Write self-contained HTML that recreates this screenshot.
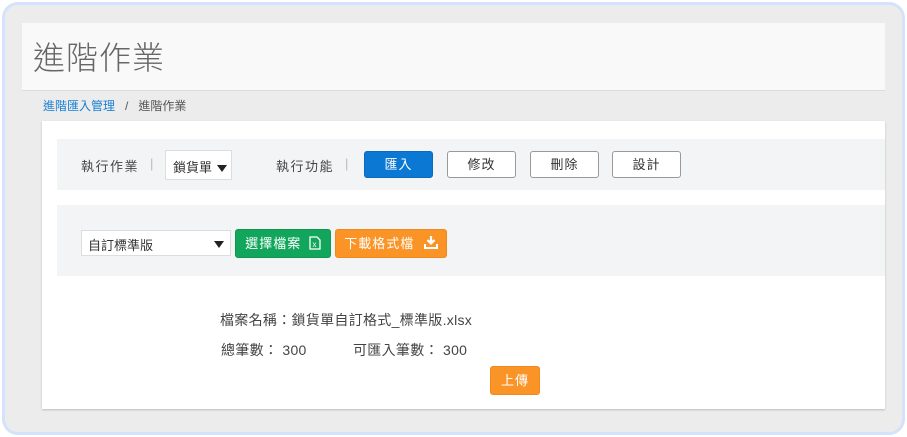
<!DOCTYPE html>
<html><head><meta charset="utf-8"><style>
*{box-sizing:border-box;margin:0;padding:0}
body{width:907px;height:437px;background:#fff;font-family:"Liberation Sans","Noto Sans CJK TC",sans-serif;position:relative;overflow:hidden;color:#333}
.frame{position:absolute;left:2px;top:2px;width:903px;height:433px;border:3px solid #d5e2fb;border-radius:16px;background:#ececec}
.a{position:absolute}
.hdr{left:22px;top:23px;width:863px;height:68px;background:#f9f9f9;border-bottom:1px solid #dcdcdc}
.hdr span{position:absolute;left:11px;top:10px;font-size:32px;color:#666;font-weight:300;letter-spacing:1px}
.bc{left:43px;top:97px;font-size:12px;color:#555}
.bc a{color:#1a7fd4;text-decoration:none}
.card{left:42px;top:121px;width:843px;height:288px;background:#fff;box-shadow:0 1px 2px rgba(0,0,0,.2)}
.row{left:57px;width:828px;background:#f3f4f6}
.lbl{font-size:13px;color:#444;letter-spacing:1.5px}
.sep{color:#bbb;font-size:13px}
.btn{height:27px;border:1px solid #999;border-radius:3px;background:#fff;font-size:13px;text-align:center;line-height:25px;color:#333;letter-spacing:1px}
.sel{background:#fff;border:1px solid #ddd;font-size:13px;color:#333}
.tri{display:inline-block;width:0;height:0;border-left:5px solid transparent;border-right:5px solid transparent;border-top:7px solid #222}
</style></head><body>
<div class="frame"></div>
<div class="a hdr"><span>進階作業</span></div>
<div class="a bc"><a>進階匯入管理</a>&nbsp;&nbsp;&nbsp;/&nbsp;&nbsp;&nbsp;進階作業</div>
<div class="a card"></div>
<div class="a row" style="top:139px;height:51px"></div>
<div class="a lbl" style="left:81px;top:156px">執行作業</div>
<div class="a sep" style="left:150px;top:156px">|</div>
<div class="a sel" style="left:165px;top:150px;width:67px;height:30px;padding:6px 0 0 7px">鎖貨單 <span class="tri" style="margin-left:1px"></span></div>
<div class="a lbl" style="left:276px;top:156px">執行功能</div>
<div class="a sep" style="left:345px;top:156px">|</div>
<div class="a btn" style="left:364px;top:151px;width:69px;background:#0b78d4;border-color:#0a6ac0;color:#fff">匯入</div>
<div class="a btn" style="left:447px;top:151px;width:69px">修改</div>
<div class="a btn" style="left:530px;top:151px;width:69px">刪除</div>
<div class="a btn" style="left:612px;top:151px;width:69px">設計</div>
<div class="a row" style="top:205px;height:71px"></div>
<div class="a sel" style="left:81px;top:230px;width:150px;height:26px;padding:4px 0 0 6px">自訂標準版<span class="tri" style="position:absolute;right:6px;top:10px"></span></div>
<div class="a btn" style="left:235px;top:229px;width:96px;height:29px;line-height:27px;background:#12a65c;border-color:#0e9652;color:#fff">選擇檔案 <svg width="12" height="14" viewBox="0 0 12 14" style="vertical-align:-2px;margin-left:3px"><path d="M1 1h7l3 3v9H1z" fill="none" stroke="#fff" stroke-width="1.3"/><text x="6" y="11" font-size="8" fill="#fff" text-anchor="middle" font-family="Liberation Sans">x</text></svg></div>
<div class="a btn" style="left:335px;top:229px;width:112px;height:29px;line-height:27px;background:#fb9426;border-color:#f08a1c;color:#fff">下載格式檔 <svg width="14" height="13" viewBox="0 0 14 13" style="vertical-align:-1px;margin-left:5px"><path d="M7 0v7M3.5 4l3.5 3.5L10.5 4" fill="none" stroke="#fff" stroke-width="2.2"/><path d="M1 8v4h12V8" fill="none" stroke="#fff" stroke-width="2"/></svg></div>
<div class="a lbl" style="left:220px;top:310px;font-size:14px;letter-spacing:0.3px">檔案名稱：鎖貨單自訂格式_標準版.xlsx</div>
<div class="a lbl" style="left:221px;top:340px;font-size:14px;letter-spacing:0.3px">總筆數： 300</div>
<div class="a lbl" style="left:353px;top:340px;font-size:14px;letter-spacing:0.3px">可匯入筆數： 300</div>
<div class="a btn" style="left:490px;top:366px;width:50px;height:29px;line-height:27px;background:#fb9426;border-color:#f08a1c;color:#fff">上傳</div>
</body></html>
